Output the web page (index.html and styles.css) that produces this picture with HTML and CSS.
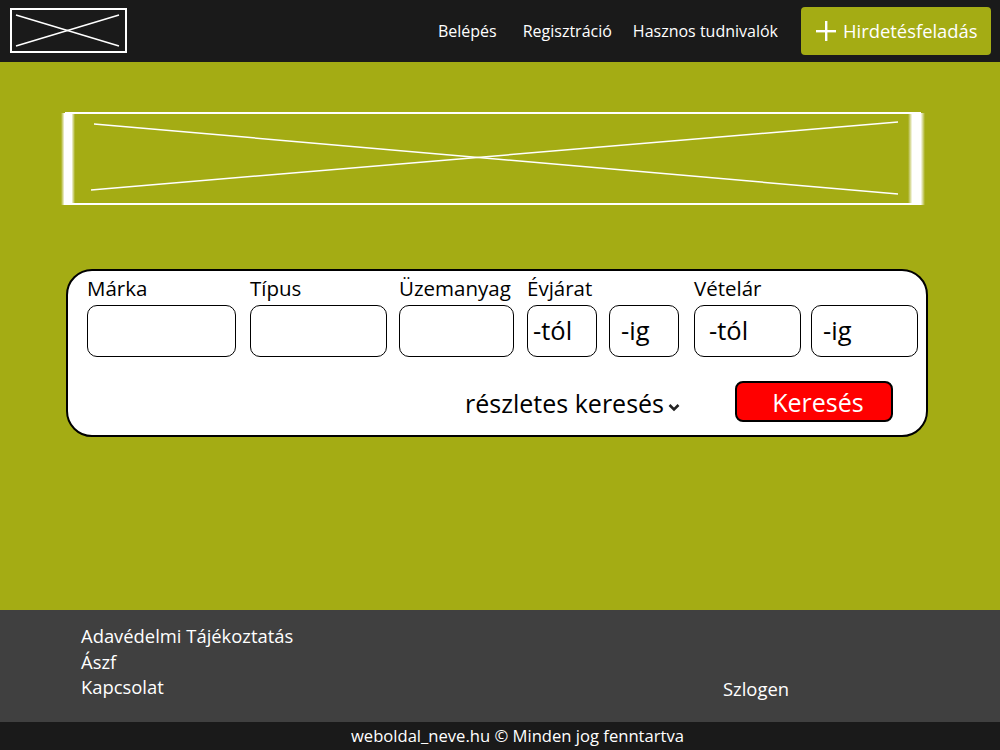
FILE: index.html
```html
<!DOCTYPE html>
<html lang="hu">
<head>
<meta charset="utf-8">
<title>Hirdetések</title>
<link rel="stylesheet" href="styles.css">
</head>
<body>
<header class="topbar">
  <div class="logo">
    <svg width="117" height="45" viewBox="0 0 117 45">
      <rect x="1" y="1" width="115" height="43" fill="none" stroke="#fff" stroke-width="2"/>
      <line x1="6" y1="7" x2="109" y2="38" stroke="#fff" stroke-width="1.5"/>
      <line x1="6" y1="38" x2="109" y2="7" stroke="#fff" stroke-width="1.5"/>
    </svg>
  </div>
  <nav class="nav">
    <a class="nav-link nav-login">Belépés</a>
    <a class="nav-link nav-reg">Regisztráció</a>
    <a class="nav-link nav-info">Hasznos tudnivalók</a>
  </nav>
  <button class="post-btn">
    <svg class="plus" width="20" height="20" viewBox="0 0 20 20">
      <rect x="9" y="0" width="2.4" height="20" fill="#fff"/>
      <rect x="0" y="9" width="20" height="2.4" fill="#fff"/>
    </svg>
    <span>Hirdetésfeladás</span>
  </button>
</header>

<main class="main">
  <div class="banner">
    <svg width="866" height="96" viewBox="0 0 866 96">
      <defs>
        <linearGradient id="glow" x1="0" x2="1" y1="0" y2="0">
          <stop offset="0" stop-color="#fff" stop-opacity="0"/>
          <stop offset="0.25" stop-color="#fff" stop-opacity="1"/>
          <stop offset="0.75" stop-color="#fff" stop-opacity="1"/>
          <stop offset="1" stop-color="#fff" stop-opacity="0"/>
        </linearGradient>
      </defs>
      <rect x="0" y="2" width="14" height="92" fill="url(#glow)"/>
      <rect x="847" y="2" width="17" height="92" fill="url(#glow)"/>
      <line x1="4" y1="2" x2="860" y2="2" stroke="#fff" stroke-width="2"/>
      <line x1="4" y1="93" x2="860" y2="93" stroke="#fff" stroke-width="2"/>
      <line x1="33" y1="13" x2="837" y2="83" stroke="#fff" stroke-width="1.5"/>
      <line x1="30" y1="79" x2="837" y2="11" stroke="#fff" stroke-width="1.5"/>
    </svg>
  </div>

  <section class="search">
    <div class="fields">
      <div class="field f-marka">
        <label class="label">Márka</label>
        <div class="box w-marka"></div>
      </div>
      <div class="field f-tipus">
        <label class="label">Típus</label>
        <div class="box w-tipus"></div>
      </div>
      <div class="field f-uzem">
        <label class="label">Üzemanyag</label>
        <div class="box w-uzem"></div>
      </div>
      <div class="field f-ev">
        <label class="label">Évjárat</label>
        <div class="pair pair-ev">
          <div class="box w-ev pad-a">-tól</div>
          <div class="box w-ev pad-b">-ig</div>
        </div>
      </div>
      <div class="field f-ar">
        <label class="label">Vételár</label>
        <div class="pair pair-ar">
          <div class="box w-ar pad-c">-tól</div>
          <div class="box w-ar pad-b">-ig</div>
        </div>
      </div>
    </div>
    <div class="actions">
      <span class="detailed">részletes keresés<svg class="chev" width="12" height="9" viewBox="0 0 12 9"><path d="M1.5 2 L6 6.5 L10.5 2" fill="none" stroke="#222" stroke-width="2.6"/></svg></span>
      <button class="search-btn">Keresés</button>
    </div>
  </section>
</main>

<footer class="footer">
  <ul class="footer-links">
    <li>Adavédelmi Tájékoztatás</li>
    <li>Ászf</li>
    <li>Kapcsolat</li>
  </ul>
  <div class="slogan">Szlogen</div>
</footer>
<div class="bottombar">weboldal_neve.hu © Minden jog fenntartva</div>
</body>
</html>
```

FILE: styles.css
```css
* { box-sizing: border-box; }
html, body { margin: 0; padding: 0; }
body {
  font-family: "Open Sans", "Lato", "Liberation Sans", sans-serif;
  width: 1000px;
  height: 750px;
  overflow: hidden;
  background: #a4ac14;
}

.topbar {
  height: 62px;
  background: #1a1a1a;
  display: flex;
  align-items: center;
  padding: 0 9px 0 10px;
}
.logo { width: 117px; height: 45px; margin-top: -2px; }
.logo svg { display: block; }
.nav {
  display: flex;
  align-items: center;
  margin-left: auto;
  color: #fff;
  font-size: 16px;
}
.nav-link { color: #fff; text-decoration: none; }
.nav-reg { margin-left: 26px; }
.nav-info { margin-left: 21px; }
.post-btn {
  margin-left: 23px;
  width: 190px;
  height: 48px;
  background: #a4ac14;
  border: none;
  border-radius: 4px;
  color: #fff;
  font-family: inherit;
  font-size: 18.4px;
  display: flex;
  align-items: center;
  padding: 0 0 2px 15px;
}
.plus { margin-right: 7px; margin-top: 2px; }

.main {
  height: 548px;
  padding-top: 49px;
}
.banner {
  margin-left: 61px;
  width: 866px;
  height: 96px;
}
.banner svg { display: block; }

.search {
  margin: 62px 0 0 66px;
  width: 862px;
  height: 168px;
  background: #fff;
  border: 2px solid #000;
  border-radius: 26px;
  padding: 3px 0 0 19px;
}
.fields { display: flex; }
.field { display: flex; flex-direction: column; }
.label {
  font-size: 20.5px;
  line-height: 28px;
  color: #000;
  height: 31px;
}
.box {
  height: 52px;
  border: 1.5px solid #000;
  border-radius: 10px;
  font-size: 25.5px;
  line-height: 48px;
  color: #000;
}
.f-marka { margin-right: 14px; }
.f-tipus { margin-right: 12px; }
.f-uzem { margin-right: 13px; }
.f-ev { margin-right: 15px; }
.w-marka { width: 149px; }
.w-tipus { width: 137px; }
.w-uzem { width: 115px; }
.w-ev { width: 70px; }
.w-ar { width: 107px; }
.pair { display: flex; }
.pair-ev { gap: 12px; }
.pair-ar { gap: 10px; }
.pad-a { padding-left: 5px; }
.pad-b { padding-left: 11px; }
.pad-c { padding-left: 14px; }

.actions {
  display: flex;
  align-items: center;
  justify-content: flex-end;
  margin-top: 24px;
  padding-right: 33px;
}
.detailed {
  font-size: 25px;
  color: #000;
  display: flex;
  align-items: center;
  margin-top: 3px;
}
.chev { margin: 8px 0 0 4px; }
.search-btn {
  margin-left: 55px;
  width: 158px;
  height: 41px;
  background: #ff0000;
  border: 2px solid #000;
  border-radius: 8px;
  color: #fff;
  font-family: inherit;
  font-size: 25px;
  padding: 0 0 0 8px;
  line-height: 34px;
}

.footer {
  height: 112px;
  background: #404040;
  color: #fff;
  display: flex;
  padding: 13px 0 0 81px;
}
.footer-links {
  list-style: none;
  margin: 0;
  padding: 0;
  font-size: 18.4px;
  line-height: 25.5px;
}
.slogan {
  margin: 53px 0 0 auto;
  margin-right: 211px;
  font-size: 18.4px;
  line-height: 25px;
}
.bottombar {
  height: 28px;
  background: #1a1a1a;
  color: #fff;
  font-size: 16.6px;
  line-height: 28px;
  padding-left: 351px;
}
```
